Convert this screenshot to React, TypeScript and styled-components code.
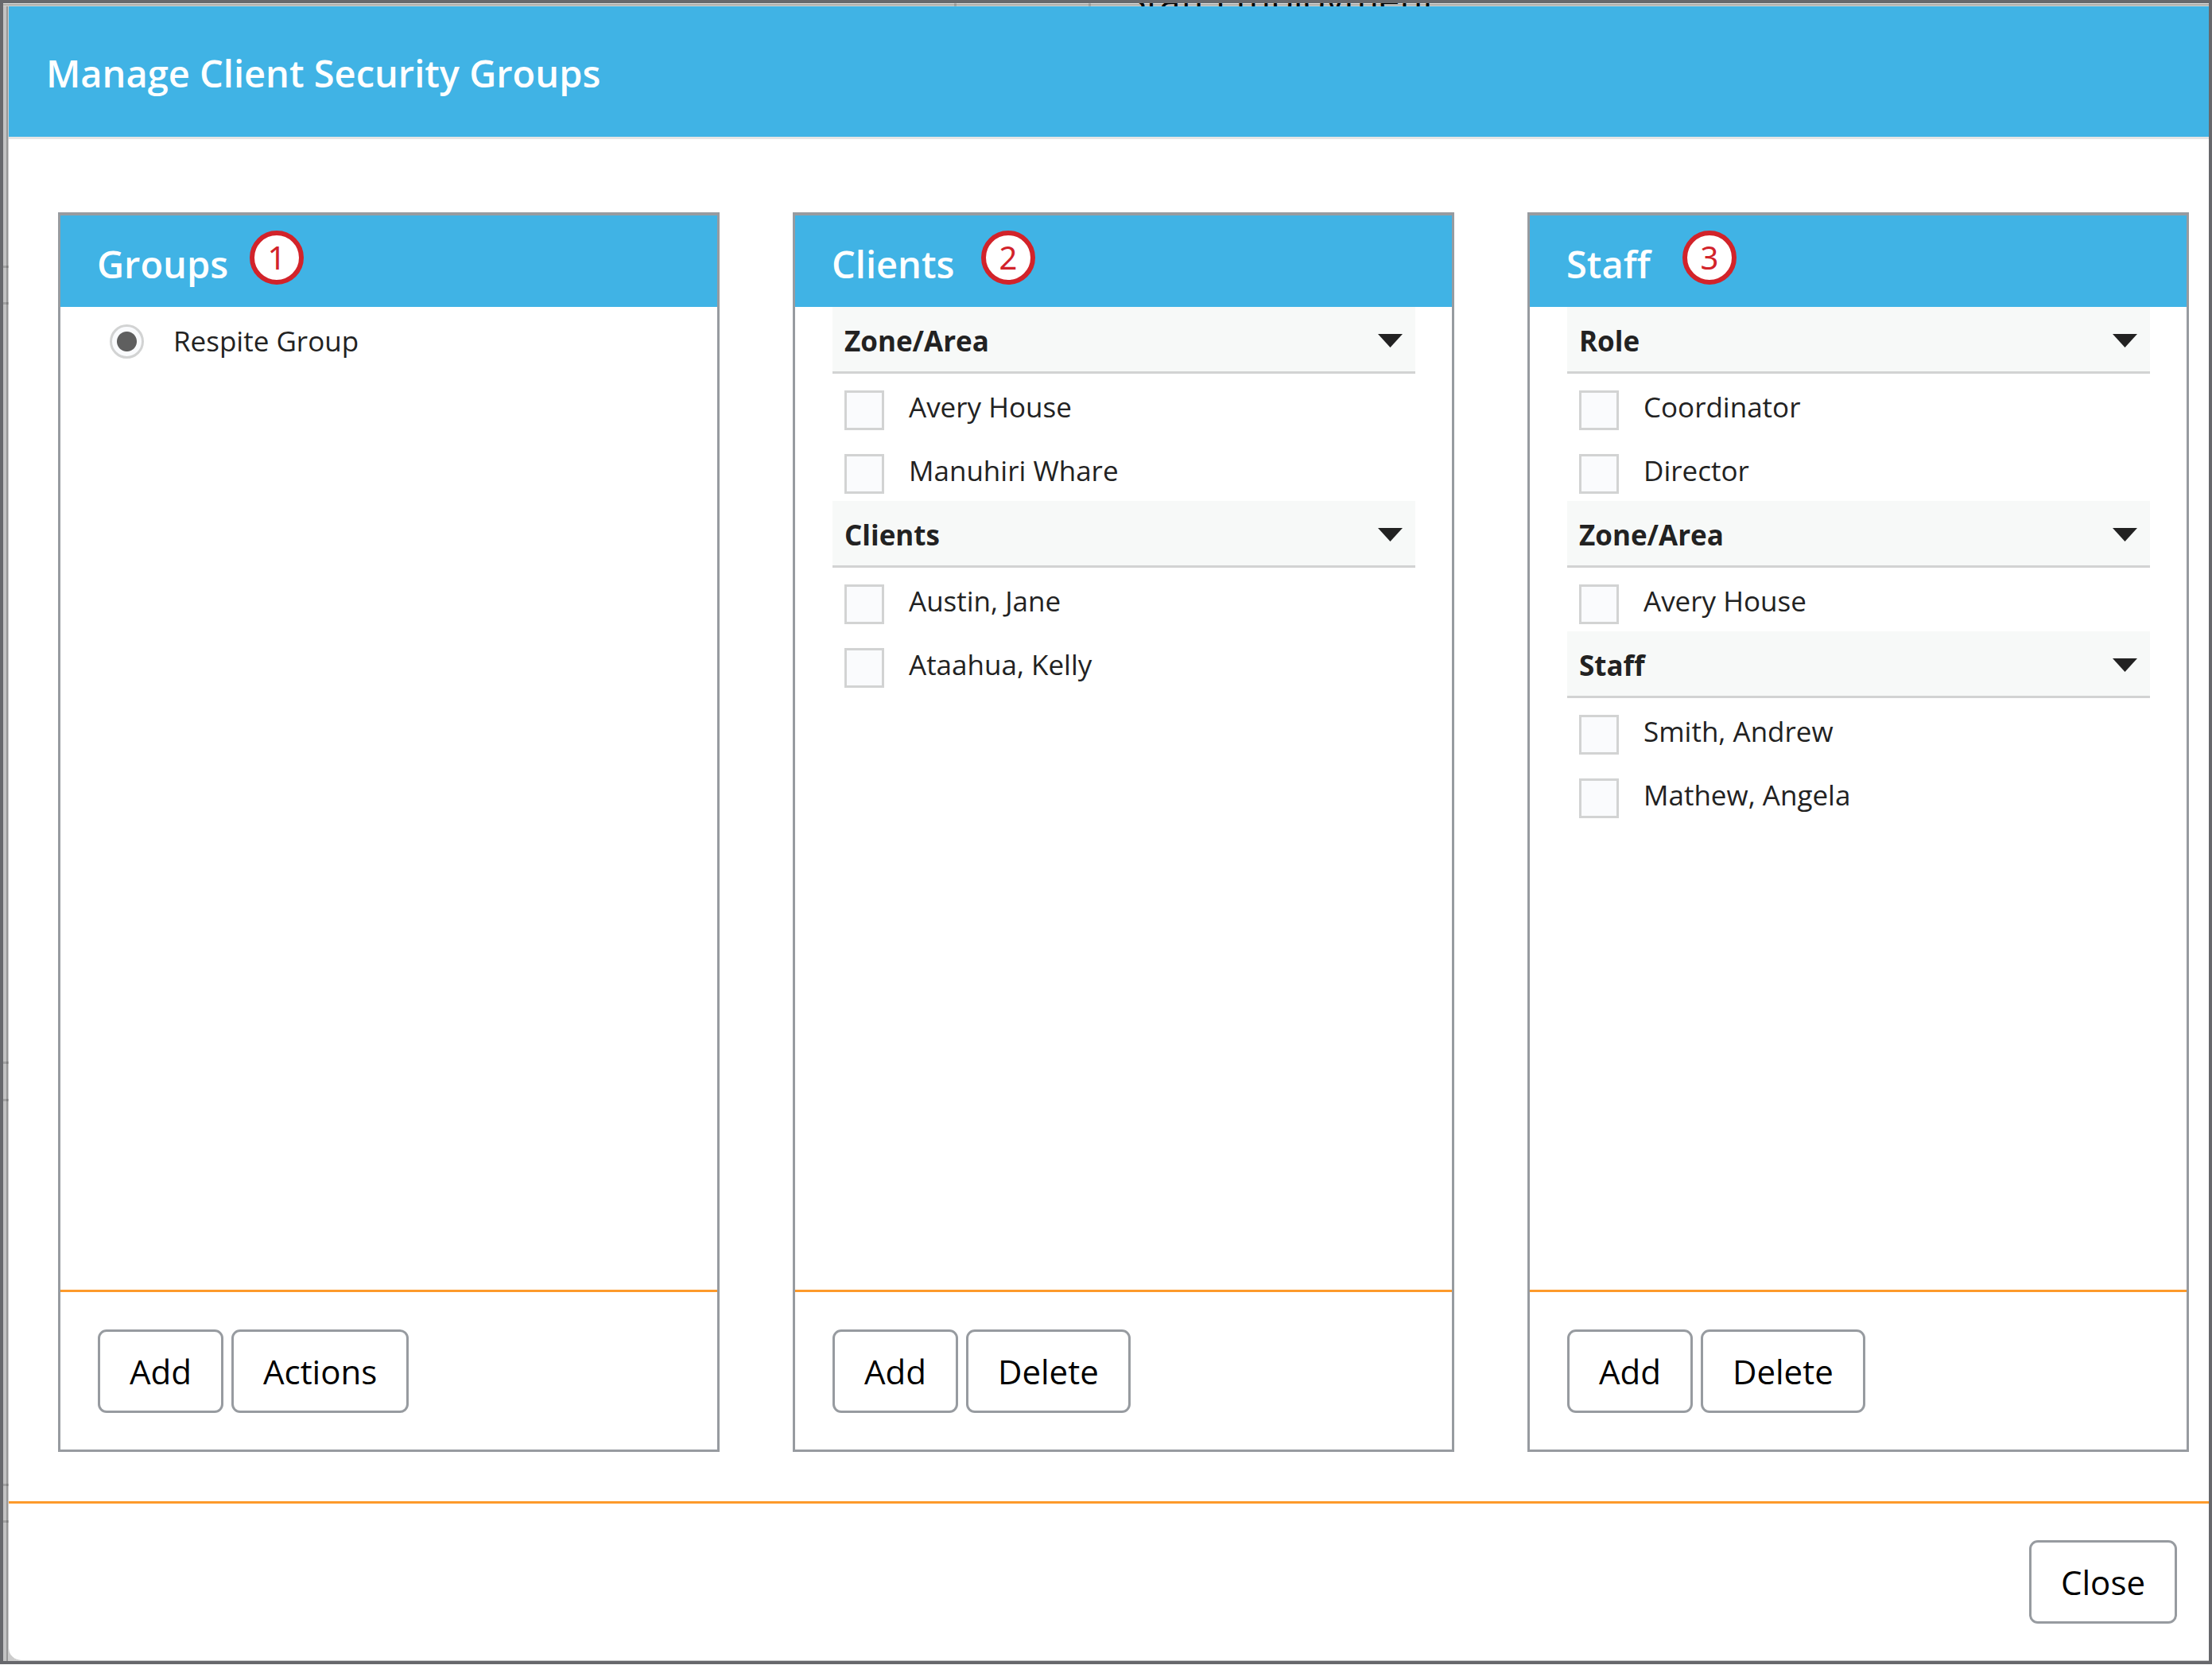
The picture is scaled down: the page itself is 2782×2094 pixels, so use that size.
import React, { useState } from 'react';
import styled, { createGlobalStyle } from 'styled-components';

const BLUE = '#40b3e5';
const ORANGE = '#fd9a2b';
const BORDER = '#979ba0';
const FRAME = '#67686c';
const LIGHT = '#d2d3d3';

const GlobalStyle = createGlobalStyle`
  * {
    box-sizing: border-box;
  }

  body {
    margin: 0;
    background: #fff;
    font-family: "Segoe UI", "Open Sans", sans-serif;
    color: #222;
  }
`;

const Frame = styled.div`
  position: relative;
  min-height: calc(100vh - 1px);
  display: flex;
  border: 4px solid ${FRAME};
  background: linear-gradient(to right, #c3c3c3 4px, #979797 4px, #979797 6px, #cccccc 6px);
`;

/* The page underneath, only its top edge shows above the dialog */
const PageEdge = styled.div`
  position: absolute;
  top: 0;
  left: 0;
  right: 0;
  height: 4px;
  overflow: hidden;
  background: linear-gradient(#dddddd 1px, #b0b0ad 1px, #b0b0ad 3px, #cfcfcd 3px);
`;

const PageHeading = styled.p`
  position: absolute;
  top: -36px;
  left: 1412px;
  margin: 0;
  font-size: 47px;
  line-height: 64px;
  color: #000;
  white-space: nowrap;
`;

const PageRule = styled.span<{ $top: number }>`
  position: absolute;
  left: 0;
  top: ${({ $top }) => $top}px;
  width: 7px;
  height: 3px;
  background: rgba(0, 0, 0, 0.16);
`;

const PageColumnRule = styled.span<{ $left: number }>`
  position: absolute;
  top: 0;
  left: ${({ $left }) => $left}px;
  width: 3px;
  height: 4px;
  background: rgba(0, 0, 0, 0.14);
`;

const Dialog = styled.div`
  position: relative;
  flex: 1;
  display: flex;
  flex-direction: column;
  margin: 4px 0 0 7px;
  background: #fff;
  border-bottom: 1px solid #c8c9c9;
  border-radius: 0 0 0 16px;
`;

const DialogHeader = styled.header`
  padding: 52px 47px 48px;
  background: ${BLUE};
  border-bottom: 3px solid #e5e5e5;
`;

const DialogTitle = styled.h1`
  margin: 0;
  font-size: 47px;
  line-height: 64px;
  font-weight: 600;
  color: #fff;
`;

const DialogBody = styled.main`
  flex: 1;
  display: grid;
  grid-template-columns: repeat(3, 1fr);
  gap: 92px;
  padding: 92px 25px 62px 62px;
`;

const DialogFooter = styled.footer`
  display: flex;
  justify-content: flex-end;
  padding: 46px 40px;
  border-top: 3px solid ${ORANGE};
`;

const PanelBox = styled.section`
  display: flex;
  flex-direction: column;
  border: 3px solid ${BORDER};
  border-top-width: 4px;
`;

const PanelHeader = styled.div`
  position: relative;
  padding: 29px 46px 22px;
  background: ${BLUE};
`;

const PanelTitle = styled.h2`
  margin: 0;
  font-size: 47px;
  line-height: 64px;
  font-weight: 600;
  color: #fff;
`;

const Badge = styled.span<{ $left: number }>`
  position: absolute;
  top: 19px;
  left: ${({ $left }) => $left}px;
  display: flex;
  align-items: center;
  justify-content: center;
  width: 68px;
  height: 68px;
  border: 6px solid #d2232a;
  border-radius: 50%;
  background: #fff;
  color: #d2232a;
  font-family: "Noto Sans", sans-serif;
  font-size: 40px;
  line-height: 56px;
`;

const PanelBody = styled.div`
  flex: 1;
  padding: 0 46px 0 47px;
`;

const PanelFooter = styled.div`
  display: flex;
  gap: 10px;
  padding: 47px 46px 46px 47px;
  border-top: 3px solid ${ORANGE};
`;

const SectionHeader = styled.button`
  display: flex;
  align-items: center;
  justify-content: space-between;
  width: 100%;
  height: 84px;
  padding: 4px 16px 0 15px;
  border: 0;
  border-bottom: 3px solid ${LIGHT};
  background: #f7f9f8;
  color: #222;
  font-family: inherit;
  font-size: 35px;
  line-height: 48px;
  font-weight: 700;
  cursor: pointer;
`;

const OptionRow = styled.label`
  display: flex;
  align-items: flex-start;
  gap: 31px;
  height: 80px;
  padding: 18px 15px 0;
  font-size: 35px;
  line-height: 48px;
`;

const CheckBox = styled.input`
  appearance: none;
  flex: none;
  width: 50px;
  height: 50px;
  margin: 3px 0 0;
  border: 3px solid ${LIGHT};
  background: #fafbfd;

  &:checked {
    box-shadow: inset 0 0 0 9px #fafbfd;
    background: #5f5f5f;
  }
`;

const RadioRow = styled.label`
  display: flex;
  align-items: center;
  gap: 37px;
  height: 86px;
  padding: 0 15px;
  font-size: 35px;
  line-height: 48px;
`;

const Radio = styled.input`
  appearance: none;
  flex: none;
  width: 43px;
  height: 43px;
  margin: 0;
  border: 3px solid ${LIGHT};
  border-radius: 50%;
  background: #fafbfd;

  &:checked {
    background: radial-gradient(circle, #5f5f5f 12px, #fafbfd 13px);
  }
`;

const Button = styled.button`
  height: 105px;
  padding: 0 37px;
  border: 3px solid ${BORDER};
  border-radius: 11px;
  background: #fff;
  color: #000;
  font-family: inherit;
  font-size: 42px;
  line-height: 60px;
  cursor: pointer;
`;

const Arrow = () => (
  <svg width="31" height="17" viewBox="0 0 31 17" aria-hidden="true">
    <path d="M0 0h31L15.500 17z" fill="#222" />
  </svg>
);

type SectionData = { title: string; items: string[] };

const clientSections: SectionData[] = [
  { title: 'Zone/Area', items: ['Avery House', 'Manuhiri Whare'] },
  { title: 'Clients', items: ['Austin, Jane', 'Ataahua, Kelly'] },
];

const staffSections: SectionData[] = [
  { title: 'Role', items: ['Coordinator', 'Director'] },
  { title: 'Zone/Area', items: ['Avery House'] },
  { title: 'Staff', items: ['Smith, Andrew', 'Mathew, Angela'] },
];

const Section = ({ title, items }: SectionData) => {
  const [isOpen, setIsOpen] = useState(true);

  return (
    <div>
      <SectionHeader type="button" aria-expanded={isOpen} onClick={() => setIsOpen(!isOpen)}>
        {title}
        <Arrow />
      </SectionHeader>
      {isOpen &&
        items.map(item => (
          <OptionRow key={item}>
            <CheckBox type="checkbox" />
            {item}
          </OptionRow>
        ))}
    </div>
  );
};

type PanelProps = {
  title: string;
  step: number;
  badgeLeft: number;
  actions: string[];
  children: React.ReactNode;
};

const Panel = ({ title, step, badgeLeft, actions, children }: PanelProps) => (
  <PanelBox>
    <PanelHeader>
      <PanelTitle>{title}</PanelTitle>
      <Badge $left={badgeLeft}>{step}</Badge>
    </PanelHeader>
    <PanelBody>{children}</PanelBody>
    <PanelFooter>
      {actions.map(action => (
        <Button key={action} type="button">{action}</Button>
      ))}
    </PanelFooter>
  </PanelBox>
);

const App = () => (
  <>
    <GlobalStyle />
    <Frame>
      <PageEdge>
        <PageColumnRule $left={1196} />
        <PageColumnRule $left={1365} />
        <PageHeading>Staff Employment</PageHeading>
      </PageEdge>
      {[330, 376, 1331, 1378, 1862, 1908].map(top => (
        <PageRule key={top} $top={top} />
      ))}
      <Dialog role="dialog" aria-labelledby="dialog-title">
        <DialogHeader>
          <DialogTitle id="dialog-title">Manage Client Security Groups</DialogTitle>
        </DialogHeader>
        <DialogBody>
          <Panel title="Groups" step={1} badgeLeft={238} actions={['Add', 'Actions']}>
            <RadioRow>
              <Radio type="radio" name="group" defaultChecked />
              Respite Group
            </RadioRow>
          </Panel>
          <Panel title="Clients" step={2} badgeLeft={234} actions={['Add', 'Delete']}>
            {clientSections.map(s => <Section key={s.title} {...s} />)}
          </Panel>
          <Panel title="Staff" step={3} badgeLeft={192} actions={['Add', 'Delete']}>
            {staffSections.map(s => <Section key={s.title} {...s} />)}
          </Panel>
        </DialogBody>
        <DialogFooter>
          <Button type="button">Close</Button>
        </DialogFooter>
      </Dialog>
    </Frame>
  </>
);

export default App;
